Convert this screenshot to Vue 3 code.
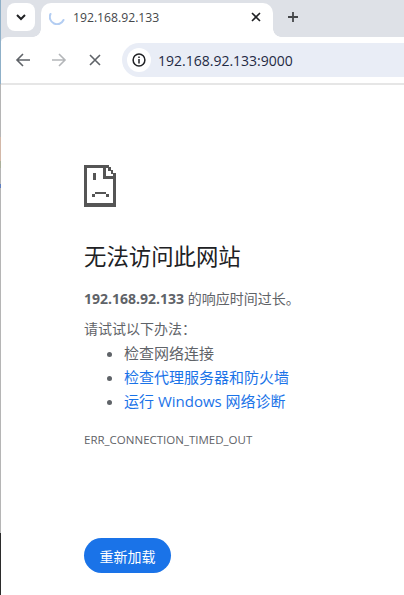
<script setup>
const steps = [
  { text: '检查网络连接', link: false },
  { text: '检查代理服务器和防火墙', link: true },
  { text: '运行 Windows 网络诊断', link: true },
]
</script>

<template>
  <div class="window">
    <span class="edge" />
    <header class="tabstrip">
      <button class="tab-search" type="button" aria-label="Search tabs">
        <svg width="12" height="12" viewBox="0 0 12 12"><path d="M2 4l4 4 4-4" fill="none" stroke="#202124" stroke-width="2" /></svg>
      </button>
      <div class="tab">
        <svg class="spinner" width="16" height="16" viewBox="0 0 16 16"><path d="M1.5 5a7 7 0 0 0 13 6" fill="none" stroke="#b3cdf2" stroke-width="2" stroke-linecap="round" /></svg>
        <span class="tab-title">192.168.92.133</span>
        <svg class="tab-close" width="10" height="10" viewBox="0 0 10 10"><path d="M1 1l8 8M9 1l-8 8" stroke="#202124" stroke-width="1.6" /></svg>
      </div>
      <svg class="new-tab" width="10" height="10" viewBox="0 0 10 10"><path d="M5 0v10M0 5h10" stroke="#45474a" stroke-width="1.8" /></svg>
    </header>

    <div class="toolbar">
      <svg class="tool" width="16" height="16" viewBox="0 0 16 16"><path d="M15 8H2M8 2L2 8l6 6" fill="none" stroke="#5f6368" stroke-width="1.6" /></svg>
      <svg class="tool" width="16" height="16" viewBox="0 0 16 16"><path d="M1 8h13M8 2l6 6-6 6" fill="none" stroke="#b4b6b9" stroke-width="1.6" /></svg>
      <svg class="tool" width="16" height="16" viewBox="0 0 16 16"><path d="M3 3l10 10M13 3L3 13" fill="none" stroke="#5f6368" stroke-width="1.6" /></svg>
      <div class="omnibox">
        <span class="info-chip">
          <svg width="14" height="14" viewBox="0 0 14 14">
            <circle cx="7" cy="7" r="5.9" fill="none" stroke="#202124" stroke-width="1.5" />
            <path d="M7 6v4.4M7 3.4v1.5" stroke="#202124" stroke-width="1.5" />
          </svg>
        </span>
        <span class="url">192.168.92.133:9000</span>
      </div>
    </div>

    <main class="page">
      <svg class="sad" width="32" height="42" viewBox="0 0 32 42" shape-rendering="crispEdges">
        <path d="M0 0h25v3h-3v8h10v31H0zM3 3v35h26V14H19V3z" fill-rule="evenodd" fill="#555" />
        <path d="M24 2h3v3h2v3h3v4h-3V9h-2V6h-3z" fill="#555" />
        <path d="M9 8h3v7H9z" fill="#555" />
        <path d="M11 27h11v2H11zM8 29h3v3H8zM22 29h3v3h-3z" fill="#555" />
      </svg>

      <h1>无法访问此网站</h1>
      <p class="summary"><strong>192.168.92.133</strong> 的响应时间过长。</p>
      <p class="try">请试试以下办法：</p>
      <ul>
        <li v-for="step in steps" :key="step.text">
          <a v-if="step.link" href="#">{{ step.text }}</a>
          <template v-else>{{ step.text }}</template>
        </li>
      </ul>
      <p class="code">ERR_CONNECTION_TIMED_OUT</p>
      <button class="reload" type="button">重新加载</button>
    </main>
  </div>
</template>

<style>
html,
body {
  margin: 0;
  background: #fff;
  overflow: hidden;
}
</style>

<style scoped>
.window {
  position: relative;
  width: 404px;
  height: 595px;
  overflow: hidden;
  background: #dee1e7;
  font-family: "Open Sans", "Noto Sans CJK SC", sans-serif;
  color: #5f6368;
}

.edge {
  position: absolute;
  z-index: 1;
  left: 0;
  top: 0;
  width: 1px;
  height: 595px;
  background: linear-gradient(
    180deg,
    #8fb0c8 0,
    #8fb0c8 84px,
    #b5b5b5 84px,
    #b5b5b5 137px,
    #d3b8a8 137px,
    #d3b8a8 161px,
    #aab09a 161px,
    #aab09a 168px,
    #b5b5b5 168px,
    #b5b5b5 184px,
    #5f7fc0 184px,
    #5f7fc0 188px,
    #b5b5b5 188px,
    #b5b5b5 533px,
    #2b2b2b 533px
  );
}

.tabstrip {
  display: flex;
  align-items: flex-start;
  height: 34px;
  padding: 3px 0 0 7px;
}

.tab-search {
  display: flex;
  align-items: center;
  justify-content: center;
  width: 28px;
  height: 28px;
  padding: 0;
  border: 0;
  border-radius: 8px;
  background: #fff;
}

.tab {
  position: relative;
  display: flex;
  align-items: center;
  width: 232px;
  height: 34px;
  margin-left: 6px;
  padding: 0 12px 6px 8px;
  box-sizing: border-box;
  border-radius: 10px 10px 0 0;
  background: #fff;
}

.tab::before,
.tab::after {
  content: '';
  position: absolute;
  bottom: 0;
  width: 8px;
  height: 8px;
}

.tab::before {
  left: -8px;
  background: radial-gradient(circle at 0 0, transparent 7.5px, #fff 8px);
}

.tab::after {
  right: -8px;
  background: radial-gradient(circle at 100% 0, transparent 7.5px, #fff 8px);
}

.spinner {
  flex: none;
}

.tab-title {
  margin-left: 8px;
  color: #45474a;
  font-size: 12.2px;
  white-space: nowrap;
}

.tab-close {
  margin-left: auto;
}

.new-tab {
  margin: 9px 0 0 15px;
}

.toolbar {
  display: flex;
  align-items: center;
  height: 46px;
  padding-left: 15px;
  border-bottom: 2px solid #e6e6e6;
  border-radius: 8px 0 0 0;
  background: #fff;
}

.tool {
  flex: none;
  margin-right: 20px;
}

.tool:nth-child(3) {
  margin-right: 19px;
}

.omnibox {
  display: flex;
  align-items: center;
  flex: 1;
  height: 34px;
  padding-left: 5px;
  border-radius: 17px 0 0 17px;
  background: #e9edf6;
}

.info-chip {
  display: flex;
  align-items: center;
  justify-content: center;
  width: 24px;
  height: 24px;
  border-radius: 50%;
  background: #fff;
}

.url {
  margin-left: 7px;
  color: #1f2a44;
  font-size: 14px;
  white-space: nowrap;
}

.page {
  display: flex;
  flex-direction: column;
  align-items: flex-start;
  height: 510px;
  padding: 80px 0 0 84px;
  box-sizing: border-box;
  background: #fff;
}

.sad {
  display: block;
}

h1 {
  margin: 34px 0 0;
  color: #202124;
  font-size: 22.4px;
  font-weight: 400;
  line-height: 32px;
}

.summary {
  margin: 16px 0 0;
  font-size: 14px;
  line-height: 20px;
}

.summary strong {
  font-weight: 700;
}

.try {
  margin: 10px 0 0;
  font-size: 14px;
  line-height: 20px;
}

ul {
  margin: 2px 0 0;
  padding: 0 0 0 40px;
  font-size: 15px;
  line-height: 24px;
}

a {
  color: #1a73e8;
  text-decoration: none;
}

.code {
  margin: 19px 0 0;
  font-size: 11.5px;
  line-height: 16px;
}

.reload {
  margin-top: 90px;
  width: 87px;
  height: 35px;
  padding: 0;
  border: 0;
  border-radius: 18px;
  background: #1a73e8;
  color: #fff;
  font-family: inherit;
  font-size: 14px;
}
</style>
